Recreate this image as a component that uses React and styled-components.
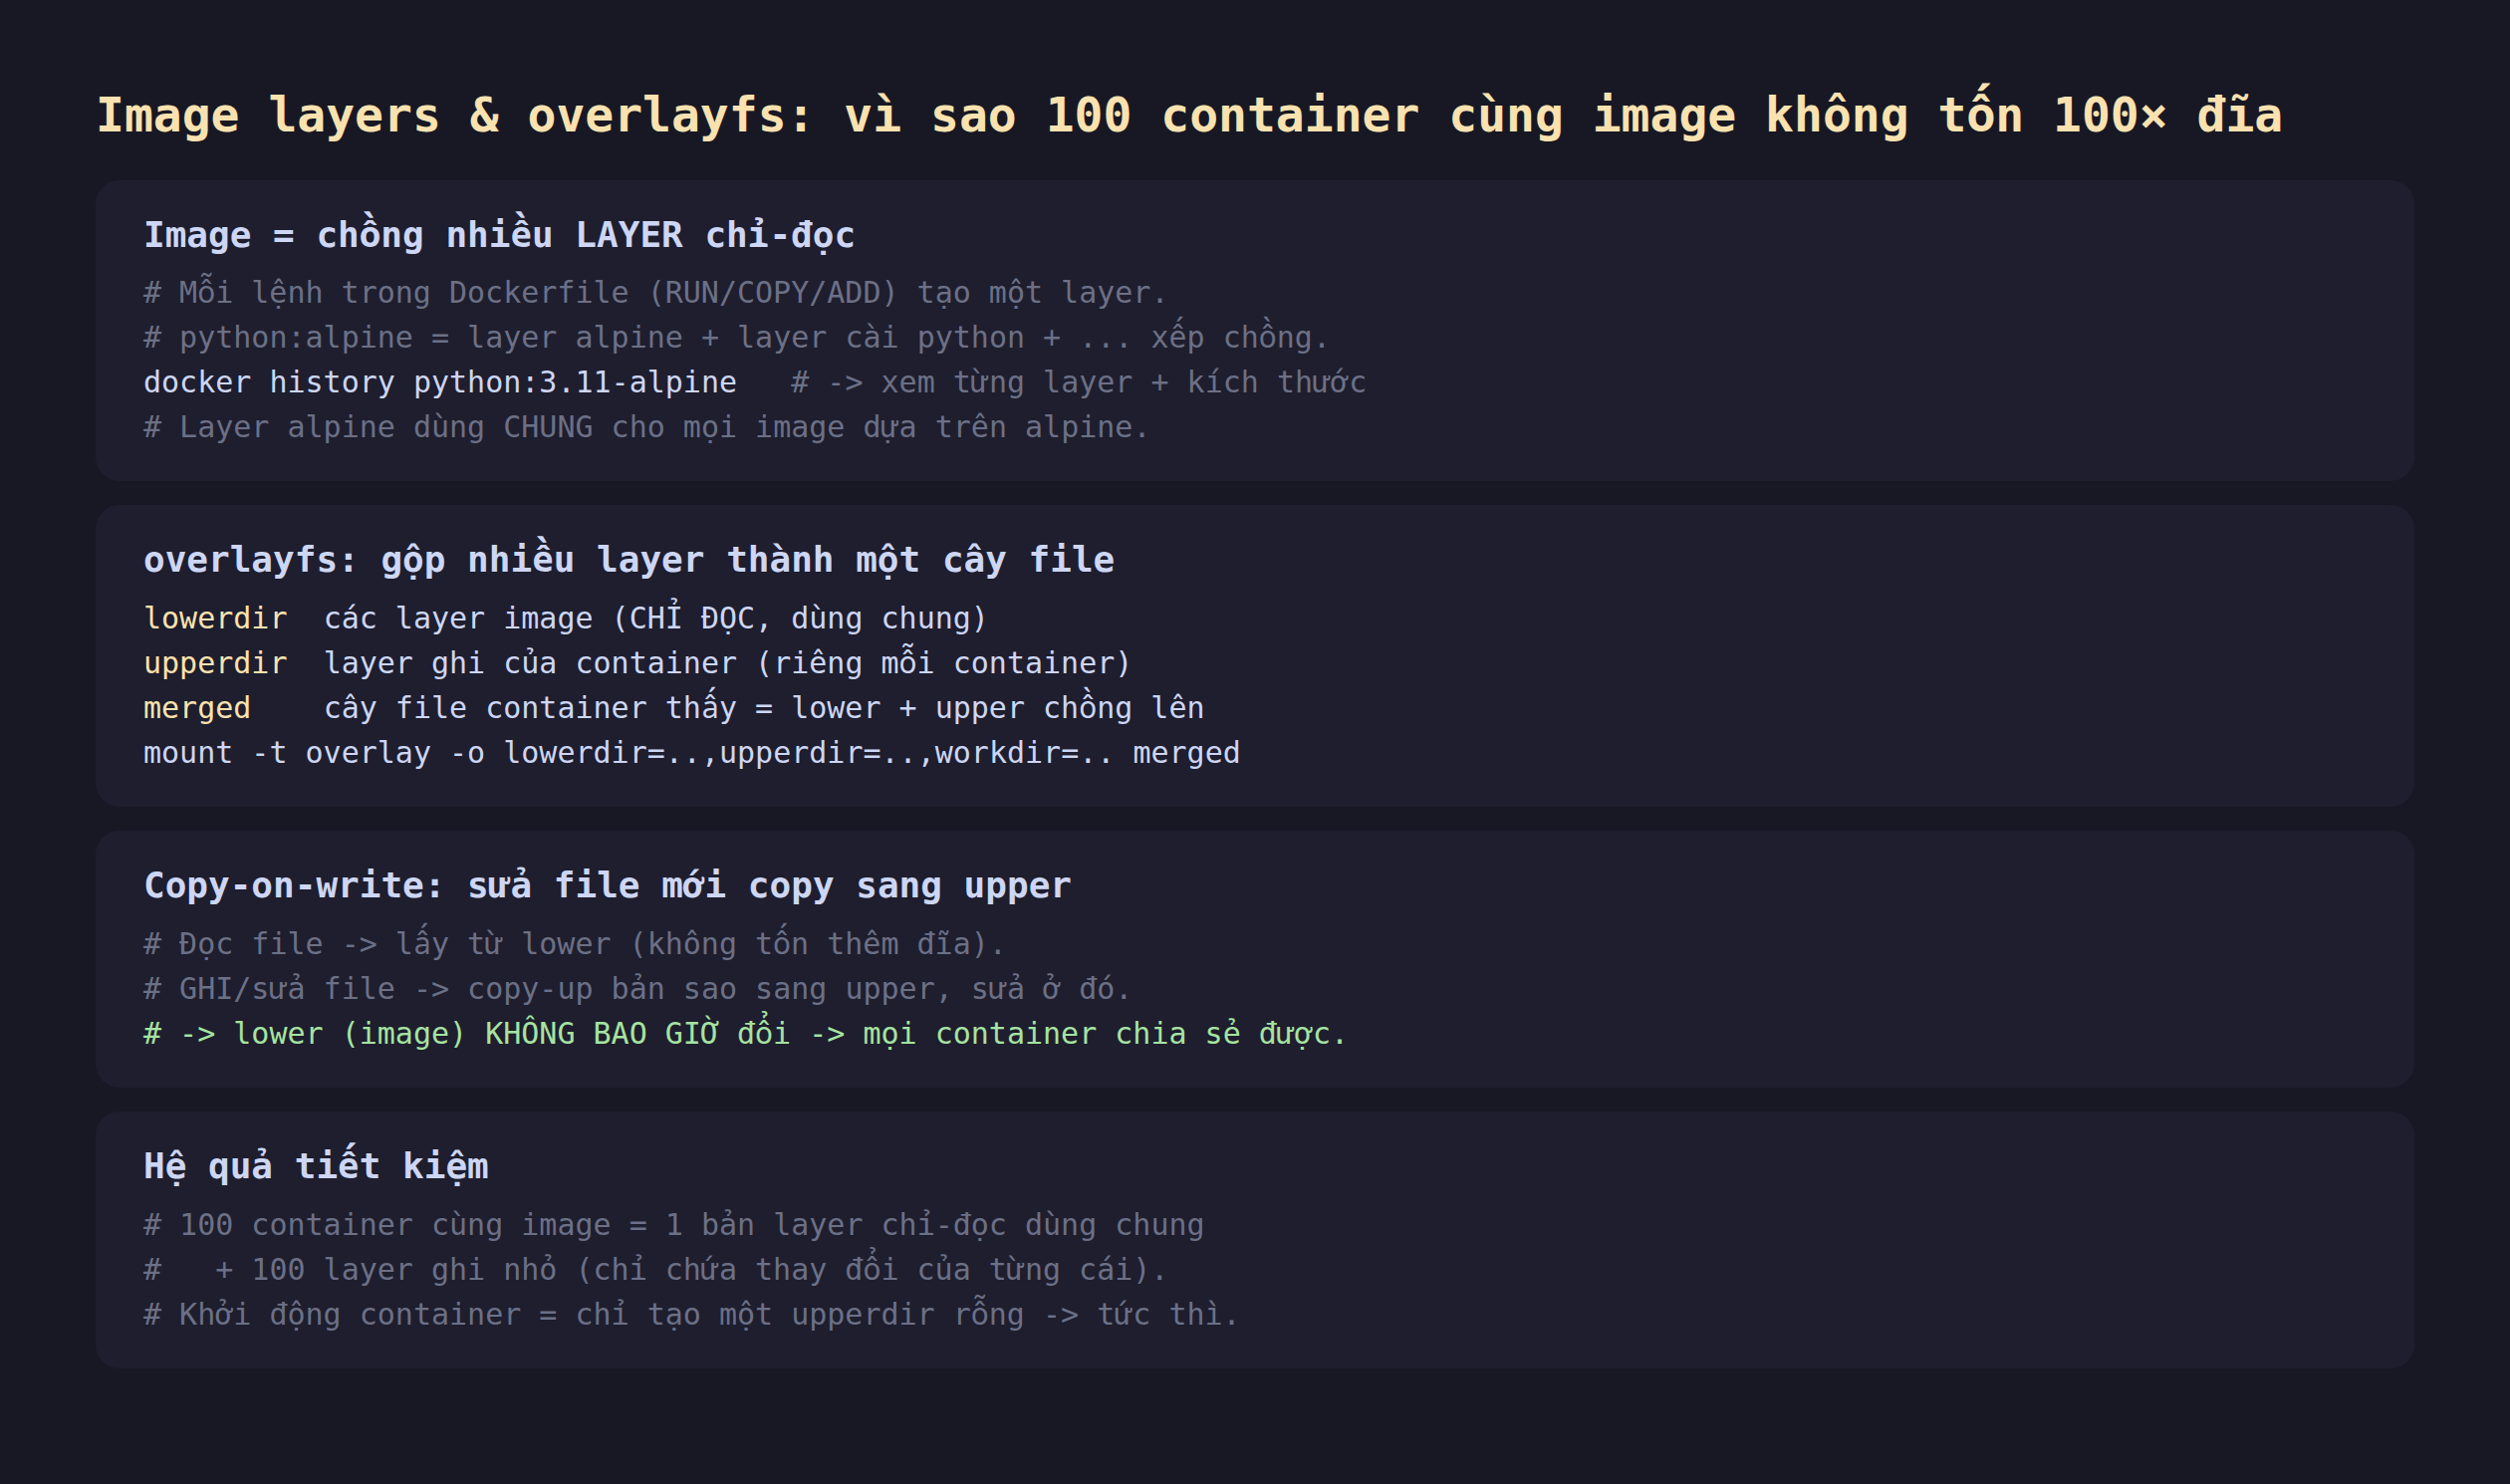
import React from "react";
import styled, { createGlobalStyle } from "styled-components";

const GlobalStyle = createGlobalStyle`
  html, body {
    margin: 0;
    padding: 0;
    background: #181825;
  }
  body {
    font-family: "DejaVu Sans Mono", "Liberation Mono", monospace;
  }
`;

const Page = styled.div`
  min-height: 100vh;
  box-sizing: border-box;
  padding: 87px 96px 96px;
  background: #181825;
`;

const Title = styled.h1`
  margin: 0 0 36px;
  font-size: 48px;
  line-height: 1.2;
  font-weight: 700;
  color: #f9e2af;
`;

const Card = styled.section`
  background: #1e1e2e;
  border-radius: 24px;
  padding: 32px 48px;
  margin-bottom: 24px;
`;

const CardTitle = styled.h2`
  margin: 0 0 12px;
  font-size: 36px;
  line-height: 1.3;
  font-weight: 700;
  color: #cdd6f4;
`;

const Line = styled.div`
  font-size: 30px;
  line-height: 45px;
  white-space: pre;
  color: ${(props) =>
    props.tone === "comment"
      ? "#6c7086"
      : props.tone === "ok"
      ? "#a6e3a1"
      : "#cdd6f4"};
`;

const Comment = styled.span`
  color: #6c7086;
`;

const Label = styled.span`
  color: #f9e2af;
`;

// DejaVu Sans Mono has no stacked-tone Vietnamese letters; borrow them
const VnGlyph = styled.span`
  font-family: "Noto Sans Mono", "DejaVu Sans Mono", monospace;
  line-height: 1;
`;

const STACKED = /([ấầẩẫếềểễốồổỗắằẳẵỉẤẦẨẪẾỀỂỄỐỒỔỖẮẰẲẴ]+)/;

const Vi = ({ children }) =>
  children
    .normalize("NFC")
    .split(STACKED)
    .map((part, i) => (i % 2 ? <VnGlyph key={i}>{part}</VnGlyph> : part));

const cards = [
  {
    title: "Image = chồng nhiều LAYER chỉ-đọc",
    lines: [
      { tone: "comment", text: "# Mỗi lệnh trong Dockerfile (RUN/COPY/ADD) tạo một layer." },
      { tone: "comment", text: "# python:alpine = layer alpine + layer cài python + ... xếp chồng." },
      { text: "docker history python:3.11-alpine   ", note: "# -> xem từng layer + kích thước" },
      { tone: "comment", text: "# Layer alpine dùng CHUNG cho mọi image dựa trên alpine." },
    ],
  },
  {
    title: "overlayfs: gộp nhiều layer thành một cây file",
    lines: [
      { label: "lowerdir  ", text: "các layer image (CHỈ ĐỌC, dùng chung)" },
      { label: "upperdir  ", text: "layer ghi của container (riêng mỗi container)" },
      { label: "merged    ", text: "cây file container thấy = lower + upper chồng lên" },
      { text: "mount -t overlay -o lowerdir=..,upperdir=..,workdir=.. merged" },
    ],
  },
  {
    title: "Copy-on-write: sửa file mới copy sang upper",
    lines: [
      { tone: "comment", text: "# Đọc file -> lấy từ lower (không tốn thêm đĩa)." },
      { tone: "comment", text: "# GHI/sửa file -> copy-up bản sao sang upper, sửa ở đó." },
      { tone: "ok", text: "# -> lower (image) KHÔNG BAO GIỜ đổi -> mọi container chia sẻ được." },
    ],
  },
  {
    title: "Hệ quả tiết kiệm",
    lines: [
      { tone: "comment", text: "# 100 container cùng image = 1 bản layer chỉ-đọc dùng chung" },
      { tone: "comment", text: "#   + 100 layer ghi nhỏ (chỉ chứa thay đổi của từng cái)." },
      { tone: "comment", text: "# Khởi động container = chỉ tạo một upperdir rỗng -> tức thì." },
    ],
  },
];

export default function App() {
  return (
    <>
      <GlobalStyle />
      <Page>
        <Title>
          <Vi>Image layers & overlayfs: vì sao 100 container cùng image không tốn 100× đĩa</Vi>
        </Title>
        {cards.map((card) => (
          <Card key={card.title}>
            <CardTitle>
              <Vi>{card.title}</Vi>
            </CardTitle>
            {card.lines.map((line, i) => (
              <Line key={i} tone={line.tone}>
                {line.label && <Label>{line.label}</Label>}
                <Vi>{line.text}</Vi>
                {line.note && (
                  <Comment>
                    <Vi>{line.note}</Vi>
                  </Comment>
                )}
              </Line>
            ))}
          </Card>
        ))}
      </Page>
    </>
  );
}
